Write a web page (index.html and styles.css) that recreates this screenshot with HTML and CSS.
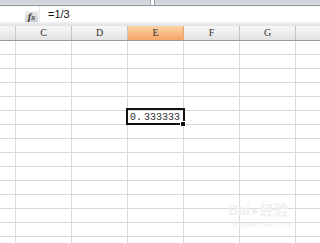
FILE: index.html
```html
<!DOCTYPE html>
<html>
<head>
<meta charset="utf-8">
<link rel="stylesheet" href="styles.css">
</head>
<body>
<div class="sheet">
  <div class="top">
    <div class="top-left"></div>
    <div class="top-right"></div>
  </div>
  <div class="fbar">
    <div class="fx-wrap"><div class="fx"><i>f</i><span class="x">x</span></div></div>
    <div class="formula">=1/3</div>
  </div>
  <div class="gap"></div>
  <div class="colhdr">
    <div class="rh"></div>
    <div class="ch">C</div>
    <div class="ch">D</div>
    <div class="ch sel">E</div>
    <div class="ch">F</div>
    <div class="ch">G</div>
    <div class="ch last"></div>
  </div>
  <div class="grid" id="grid"></div>
  <div class="watermark">
    <div class="wm1">Bai<span class="paw">●</span>经验</div>
    <div class="wm2">jingyan.baidu.com</div>
  </div>
</div>
<script>
  var g = document.getElementById('grid');
  for (var r = 0; r < 15; r++) {
    var row = document.createElement('div');
    row.className = 'row';
    var cls = ['rh','c','c','c','c','c','c last'];
    for (var i = 0; i < cls.length; i++) {
      var c = document.createElement('div');
      c.className = cls[i];
      if (r === 5 && i === 3) {
        c.className += ' active';
        c.innerHTML = '<span class="val"><span class="dot">0.</span>333333</span><span class="handle"></span>';
      }
      row.appendChild(c);
    }
    g.appendChild(row);
  }
</script>
</body>
</html>
```

FILE: styles.css
```css
html, body {
  margin: 0;
  padding: 0;
  background: #fff;
  overflow: hidden;
}
.sheet {
  position: relative;
  width: 320px;
  height: 243px;
  overflow: hidden;
  font-family: "Liberation Sans", Arial, sans-serif;
}
.top {
  height: 5px;
  display: flex;
  border-bottom: 1px solid #8d939c;
}
.top-left {
  width: 150px;
  background: linear-gradient(#cdd2da, #d9dde4);
  border-right: 1px solid #9aa0a8;
}
.top-right {
  flex: 1;
  margin-left: 3px;
  background: linear-gradient(#cdd2da, #d9dde4);
  border-left: 1px solid #9aa0a8;
}
.fbar {
  height: 16px;
  display: flex;
  align-items: center;
  background: #fff;
}
.fx-wrap {
  width: 40px;
  height: 16px;
  display: flex;
  justify-content: flex-end;
  align-items: flex-end;
  border-right: 1px solid #e4e7ec;
  box-sizing: border-box;
}
.fx {
  width: 13px;
  height: 11px;
  margin-right: 1px;
  background: linear-gradient(#efefef, #c9ccd1);
  font-family: "Liberation Serif", serif;
  font-size: 11px;
  line-height: 11px;
  color: #3c3c3c;
  text-align: center;
  font-weight: bold;
}
.fx i { font-style: italic; }
.fx .x { font-size: 8px; font-style: italic; }
.formula {
  padding-left: 8px;
  font-size: 11px;
  color: #111;
  line-height: 16px;
}
.gap {
  height: 4px;
  background: linear-gradient(#eef0f3, #dfe2e7);
}
.colhdr {
  display: flex;
  height: 14px;
  border-bottom: 1px solid #9b9b9b;
  background: linear-gradient(#f7f7f7, #e2e2e2);
}
.colhdr .rh {
  width: 15px;
  border-right: 1px solid #c9c9c9;
}
.ch {
  width: 55px;
  border-right: 1px solid #c5c5c5;
  text-align: center;
  font-family: "Liberation Serif", serif;
  font-size: 10px;
  line-height: 14px;
  color: #333;
}
.ch.sel {
  background: linear-gradient(#fcd3a6, #f6a566);
  border-right-color: #e9a56f;
}
.ch.last { flex: 1; border-right: none; }
.row {
  display: flex;
  height: 13px;
  border-bottom: 1px solid #dadada;
}
.row .rh {
  width: 15px;
  border-right: 1px solid #d9dee6;
}
.row .c {
  width: 55px;
  border-right: 1px solid #dadada;
  position: relative;
}
.row .c.last { flex: 1; border-right: none; }
.c.active { z-index: 2; }
.c.active::before {
  content: "";
  position: absolute;
  left: -2px;
  top: -3px;
  right: -2px;
  bottom: -1px;
  border: 2px solid #111;
}
.val {
  position: absolute;
  right: 3px;
  top: 0;
  font-family: "Liberation Mono", monospace;
  font-size: 10px;
  line-height: 13px;
  color: #333;
}
.val .dot { margin-right: 2px; }
.handle {
  position: absolute;
  right: -3px;
  bottom: -3px;
  width: 4px;
  height: 4px;
  background: #111;
  border: 1px solid #fff;
}
.watermark {
  position: absolute;
  left: 228px;
  top: 202px;
  color: #efefef;
  pointer-events: none;
}
.wm1 {
  font-size: 14px;
  font-weight: bold;
  line-height: 16px;
  font-family: "Liberation Sans", "Noto Sans CJK SC", sans-serif;
}
.wm1 .paw { font-size: 13px; margin: 0 1px; }
.wm2 {
  font-size: 8px;
  line-height: 12px;
  margin-left: 4px;
  font-family: "Liberation Serif", serif;
}
```
